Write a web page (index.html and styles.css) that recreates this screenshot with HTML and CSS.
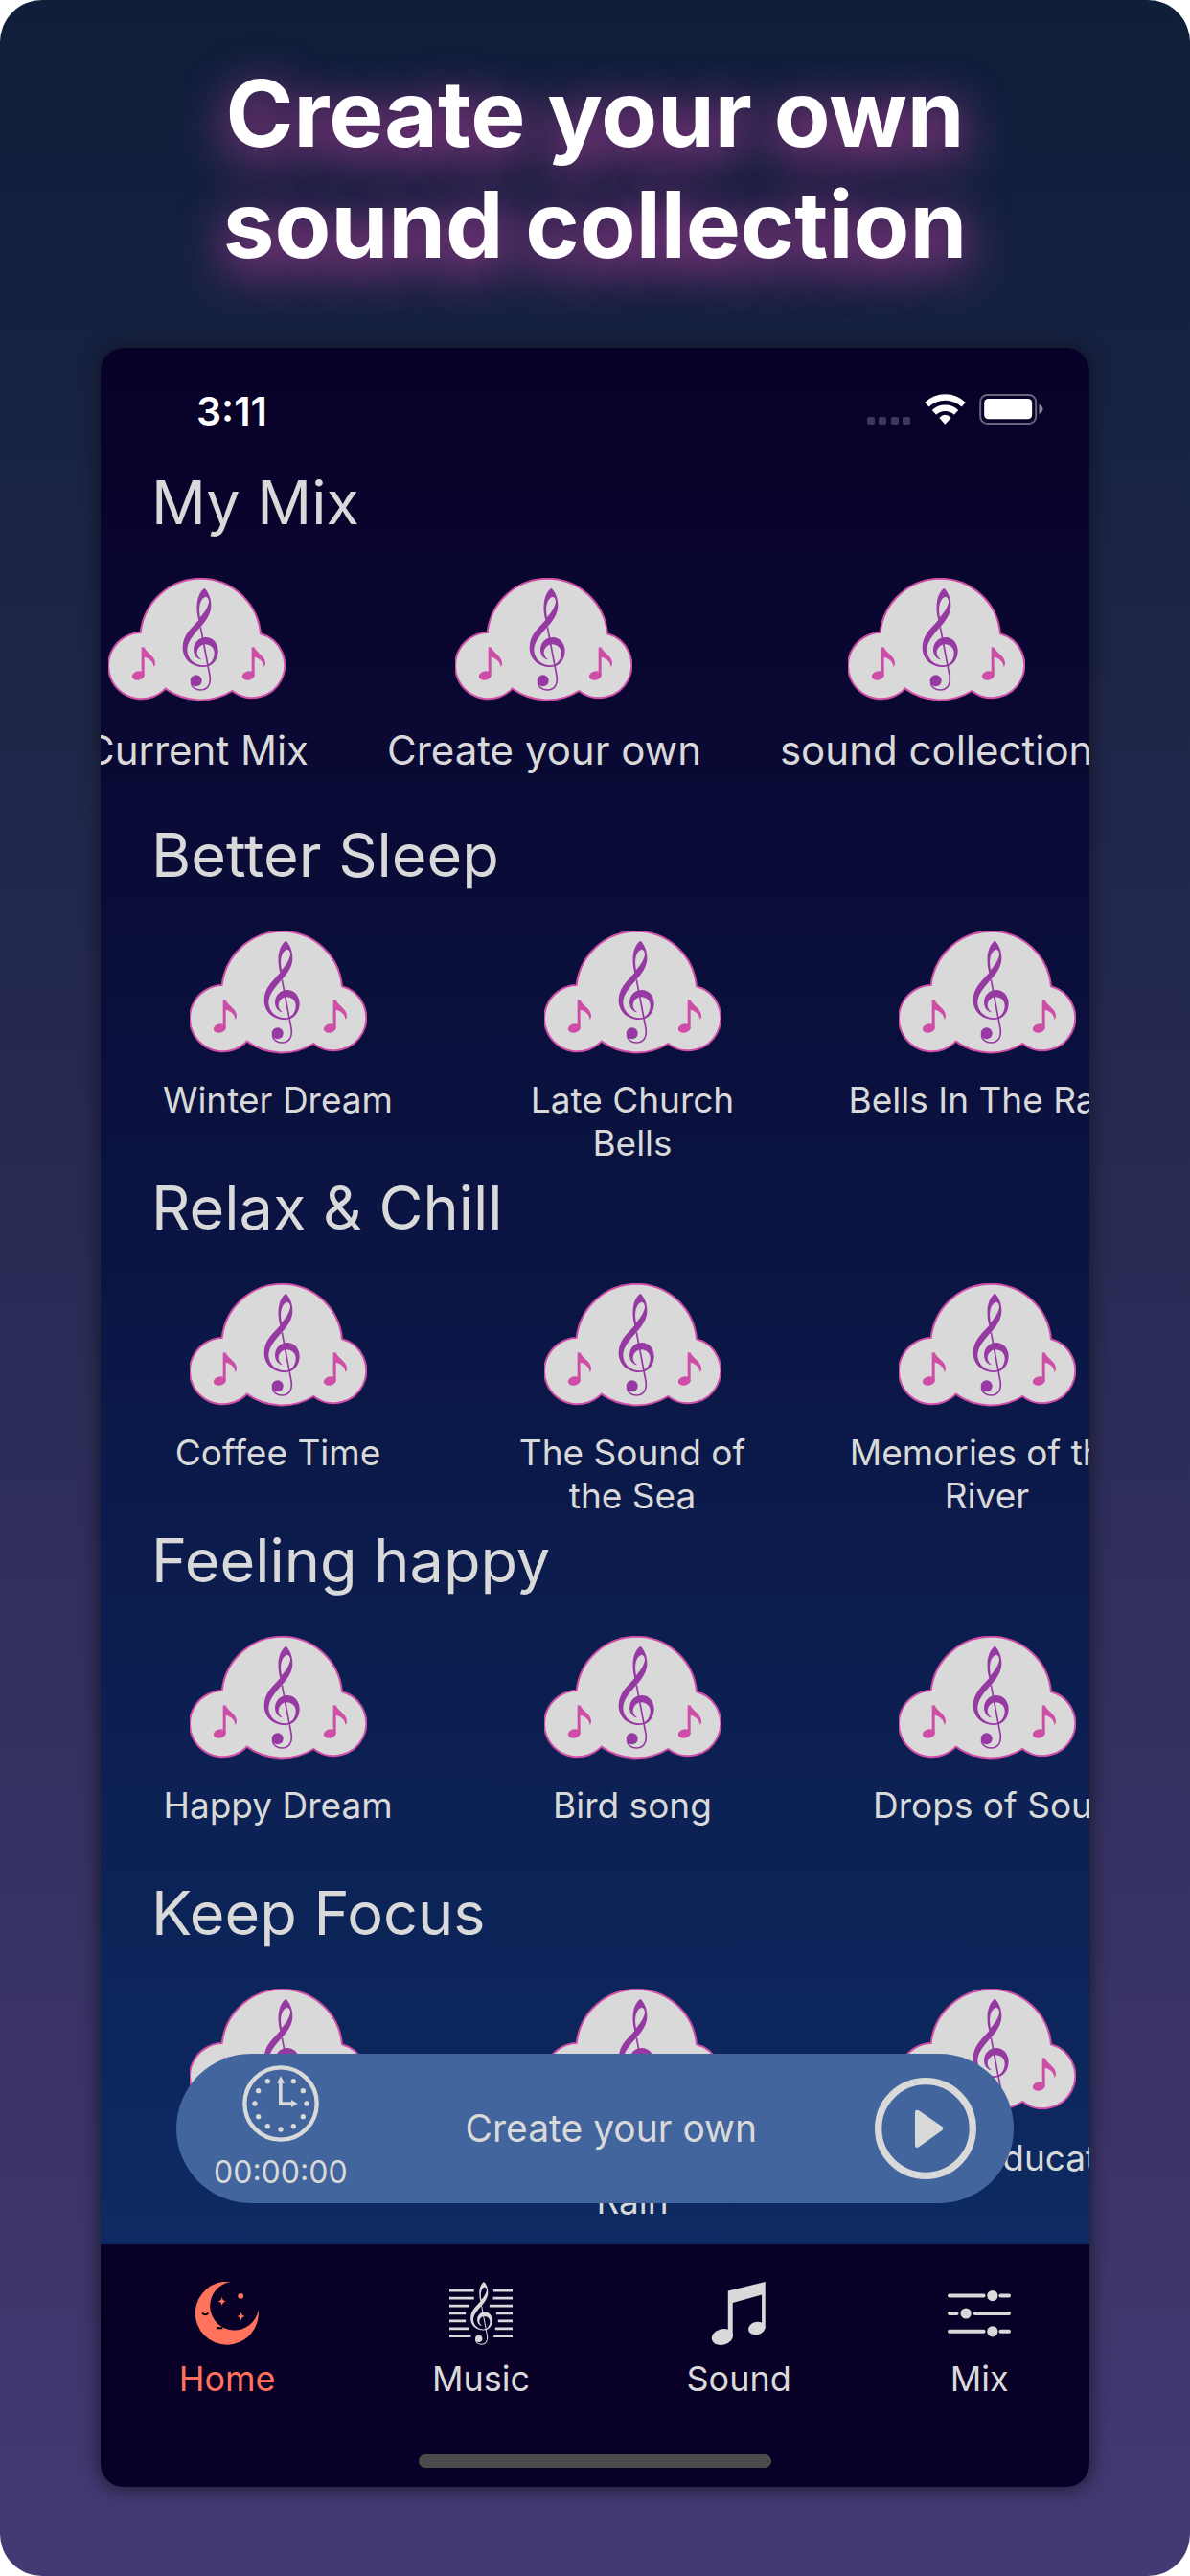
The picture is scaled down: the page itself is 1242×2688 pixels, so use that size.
FILE: index.html
```html
<!DOCTYPE html>
<html lang="en">
<head>
  <meta charset="UTF-8">
  <title>Create your own sound collection</title>
  <meta name="viewport" content="width=device-width, initial-scale=1">
  <link rel="stylesheet" href="styles.css">
</head>

<body>
  <!-- shared icons -->
  <svg class="sprite" aria-hidden="true">
    <symbol id="clef" viewBox="0 0 180 360" overflow="visible">
      <path fill="currentColor" fill-rule="evenodd" d="M82 126C72 90 74 46 100 26C114 38 122 62 121 84C119 118 92 142 72 166C52 190 46 206 46 222C48 250 72 268 98 268C118 268 131 250 131 229C131 212 116 201 101 202C84 203 74 222 78 234C80 242 86 247 91 250C80 251 66 238 66 220C66 196 84 180 104 180C128 180 143 200 143 223C143 252 124 273 98 273C60 273 32 248 32 212C32 172 62 150 82 126ZM87 118C104 98 114 80 114 66C113 58 108 53 103 54C90 58 79 80 87 118Z"/>
      <path fill="none" stroke="currentColor" stroke-width="5" d="M88 148L117 300C122 330 108 345 88 345C72 345 60 336 58 322"/>
      <circle fill="currentColor" cx="74" cy="316" r="18"/>
    </symbol>
    <symbol id="note" viewBox="0 0 74 108">
      <path fill="currentColor" d="M30 0H39C44 18 73 28 73 50C73 54 72 58 69 62C67 46 56 35 39 31V84H30Z"/>
      <ellipse fill="currentColor" cx="20" cy="89" rx="20" ry="14" transform="rotate(-14 20 89)"/>
    </symbol>
    <symbol id="cloud" viewBox="0 0 555 387">
      <path fill="#d9d9d9" stroke="#cf4da6" stroke-width="6" d="M101 171A189 190 0 0 1 477 175A102 102 0 1 1 388 354A188 188 0 0 1 179 347A104 104 0 1 1 101 171Z"/>
      <use href="#clef" x="201" y="6" width="180" height="360" color="#9639a2"/>
      <use href="#note" x="74" y="217" width="74" height="108" color="#cf4da6"/>
      <use href="#note" x="419" y="217" width="74" height="108" color="#cf4da6"/>
    </symbol>
  </svg>

  <div class="page">
    <h1 class="headline">Create your own<br>sound collection</h1>

    <div class="screen">
      <header class="status">
        <span class="status-time">3:11</span>
        <div class="status-icons">
          <svg class="cell" viewBox="0 0 46 8" fill="#3f3759">
            <rect width="8" height="8" rx="2"/>
            <rect x="12" width="8" height="8" rx="2"/>
            <rect x="25" width="8" height="8" rx="2"/>
            <rect x="37" width="8" height="8" rx="2"/>
          </svg>
          <svg class="wifi" viewBox="0 0 129 96" fill="none" stroke="#fff" stroke-width="19">
            <path d="M7 34A82 82 0 0 1 122 34"/>
            <path d="M30 58A50 50 0 0 1 99 58"/>
            <path fill="#fff" stroke="none" d="M46 75Q64 56 83 75L64 95Z"/>
          </svg>
          <svg class="battery" viewBox="0 0 200 96">
            <rect x="3" y="3" width="174" height="90" rx="22" fill="none" stroke="#6b6580" stroke-width="6"/>
            <rect x="15" y="15" width="150" height="64" rx="13" fill="#fff"/>
            <path d="M187 32Q199 38 199 47T187 63Z" fill="#8d889c"/>
          </svg>
        </div>
      </header>

      <main class="content">
        <section class="group">
          <h2 class="group-title">My Mix</h2>
          <div class="mixes">
            <button class="mix"><svg class="cloud"><use href="#cloud"/></svg>Current Mix</button>
            <button class="mix"><svg class="cloud"><use href="#cloud"/></svg>Create your own</button>
            <button class="mix"><svg class="cloud"><use href="#cloud"/></svg>sound collection</button>
          </div>
        </section>

        <section class="group">
          <h2 class="group-title">Better Sleep</h2>
          <div class="tracks">
            <button class="track"><svg class="cloud"><use href="#cloud"/></svg>Winter Dream</button>
            <button class="track"><svg class="cloud"><use href="#cloud"/></svg>Late Church Bells</button>
            <button class="track"><svg class="cloud"><use href="#cloud"/></svg>Bells In The Rain</button>
          </div>
        </section>

        <section class="group">
          <h2 class="group-title">Relax &amp; Chill</h2>
          <div class="tracks">
            <button class="track"><svg class="cloud"><use href="#cloud"/></svg>Coffee Time</button>
            <button class="track"><svg class="cloud"><use href="#cloud"/></svg>The Sound of the Sea</button>
            <button class="track"><svg class="cloud"><use href="#cloud"/></svg>Memories of the River</button>
          </div>
        </section>

        <section class="group">
          <h2 class="group-title">Feeling happy</h2>
          <div class="tracks">
            <button class="track"><svg class="cloud"><use href="#cloud"/></svg>Happy Dream</button>
            <button class="track"><svg class="cloud"><use href="#cloud"/></svg>Bird song</button>
            <button class="track"><svg class="cloud"><use href="#cloud"/></svg>Drops of Soul</button>
          </div>
        </section>

        <section class="group">
          <h2 class="group-title">Keep Focus</h2>
          <div class="tracks">
            <button class="track"><svg class="cloud"><use href="#cloud"/></svg>Focus</button>
            <button class="track"><svg class="cloud"><use href="#cloud"/></svg>The Sound of Rain</button>
            <button class="track"><svg class="cloud"><use href="#cloud"/></svg>School Educate</button>
          </div>
        </section>

        <div class="player">
          <button class="timer">
            <svg class="clock" viewBox="0 0 240 240" fill="currentColor">
              <circle cx="120" cy="120" r="113" fill="none" stroke="currentColor" stroke-width="13"/>
              <circle cx="160" cy="50" r="8"/>
              <circle cx="190" cy="80" r="8"/>
              <circle cx="201" cy="120" r="8"/>
              <circle cx="190" cy="161" r="8"/>
              <circle cx="160" cy="191" r="8"/>
              <circle cx="120" cy="201" r="8"/>
              <circle cx="79" cy="191" r="8"/>
              <circle cx="50" cy="161" r="8"/>
              <circle cx="39" cy="120" r="8"/>
              <circle cx="50" cy="80" r="8"/>
              <circle cx="79" cy="50" r="8"/>
              <path d="M120 34L132 56H125V115H153V108L173 120L153 132V125H114V56H108Z"/>
            </svg>
            00:00:00
          </button>
          <span class="player-title">Create your own</span>
          <button class="play" aria-label="Play">
            <svg viewBox="0 0 318 318" fill="currentColor">
              <circle cx="159" cy="159" r="148" fill="none" stroke="currentColor" stroke-width="22"/>
              <path d="M126 110Q126 97 138 103L211 153Q217 159 211 165L138 217Q126 223 126 210Z"/>
            </svg>
          </button>
        </div>
      </main>

      <nav class="tabs">
        <a class="tab active" href="#">
          <svg viewBox="0 0 200 200" fill="currentColor">
            <path d="M112 0A100 100 0 1 0 199 89A77 77 0 1 1 112 0Z"/>
            <circle cx="143" cy="45" r="9"/>
            <path d="M84 47Q85 61 97 62Q85 63 84 77Q83 63 71 62Q83 61 84 47Z"/>
            <path d="M144 94Q145 108 157 109Q145 110 144 124Q143 110 131 109Q143 108 144 94Z"/>
            <path d="M21 99Q31 109 41 99M67 146H86" fill="none" stroke="#000" stroke-width="6"/>
          </svg>
          Home
        </a>
        <a class="tab" href="#">
          <svg viewBox="0 0 200 200">
            <path d="M0 28H78M139 28H200M0 52H78M138 52H200M0 76H63M127 76H200M0 100H52M148 100H200M0 124H52M154 124H200M0 148H62M145 148H200M0 172H68M140 172H200" stroke="currentColor" stroke-width="8"/>
            <use href="#clef" x="47" y="-16" width="112" height="223"/>
          </svg>
          Music
        </a>
        <a class="tab" href="#">
          <svg viewBox="-15 0 200 200" fill="currentColor">
            <path d="M51 29L169 0V147H158V41L66 67V174H51Z"/>
            <ellipse cx="33" cy="174" rx="34" ry="25" transform="rotate(-14 33 174)"/>
            <ellipse cx="142" cy="147" rx="27" ry="20" transform="rotate(-14 142 147)"/>
          </svg>
          Sound
        </a>
        <a class="tab" href="#">
          <svg viewBox="0 0 200 200" fill="currentColor">
            <path d="M6 44H114M168 44H194M6 100H29M87 100H194M6 157H114M168 157H194" stroke="currentColor" stroke-width="12" stroke-linecap="round"/>
            <circle cx="142" cy="44" r="17"/>
            <circle cx="58" cy="100" r="17"/>
            <circle cx="142" cy="157" r="17"/>
          </svg>
          Mix
        </a>
      </nav>
      <div class="home-bar"></div>
    </div>
  </div>
</body>
</html>
```
FILE: styles.css
```css
* { box-sizing: border-box; }

body {
  margin: 0;
  background: #fff;
  font-family: Inter, "Noto Sans", sans-serif;
  color: #d9d9d9;
}

h1, h2 { margin: 0; }

button {
  padding: 0;
  border: 0;
  background: none;
  color: inherit;
  font: inherit;
}

svg { display: block; }

.sprite {
  position: absolute;
  width: 0;
  height: 0;
}

.page {
  display: flex;
  flex-direction: column;
  min-height: 100vh;
  padding: 60px 105px 93px;
  border-radius: 44px;
  background: linear-gradient(#0f1e39, #453973);
}

.headline {
  margin-bottom: 71px;
  color: #fff;
  font-size: 96px;
  font-weight: 700;
  line-height: 116px;
  text-align: center;
  text-shadow: 0 12px 50px rgb(214, 73, 178);
}

.screen {
  display: flex;
  flex-direction: column;
  flex: 1;
  overflow: hidden;
  border-radius: 24px;
  background: linear-gradient(#080027, #0d2b62 89%);
  box-shadow: 0 0 16px 4px rgba(16, 18, 28, 0.6);
}

/* status bar */
.status {
  display: flex;
  justify-content: space-between;
  height: 125px;
  padding: 42px 48px 0 100px;
}

.status-time {
  color: #fff;
  font-size: 41px;
  font-weight: 600;
  line-height: 48px;
}

.status-icons {
  display: flex;
  align-items: flex-end;
  height: 38px;
}

.cell { width: 46px; height: 8px; margin-right: 14px; }
.wifi { width: 43px; height: 32px; margin-right: 14px; }
.battery { width: 67px; height: 32px; }

/* sound groups */
.content {
  position: relative;
  flex: 1;
}

.group { padding-bottom: 9px; }

.group-title {
  padding: 0 53px;
  font-size: 63px;
  font-weight: 400;
  line-height: 72px;
}

.mixes, .tracks {
  display: flex;
  min-height: 287px;
  padding-top: 43px;
}

.mixes {
  gap: 82px;
  margin-left: -16px;
  font-size: 42px;
  line-height: 51px;
  white-space: nowrap;
}

.mix {
  display: flex;
  flex-direction: column;
  align-items: center;
}

.track {
  display: flex;
  flex-direction: column;
  align-items: center;
  flex: none;
  width: 370px;
  padding: 0 37px;
  font-size: 37px;
  line-height: 45px;
}

.cloud {
  flex: none;
  width: 185px;
  height: 129px;
  margin-bottom: 25px;
}

/* floating player */
.player {
  position: absolute;
  right: 79px;
  bottom: 43px;
  left: 79px;
  display: flex;
  align-items: center;
  justify-content: space-between;
  height: 156px;
  padding: 0 39px;
  border-radius: 78px;
  background: #43659d;
}

.timer {
  display: flex;
  flex-direction: column;
  align-items: center;
  gap: 12px;
  font-size: 32px;
  line-height: 40px;
}

.clock { width: 80px; height: 80px; }

.player-title {
  font-size: 39px;
  line-height: 48px;
}

.play { width: 106px; height: 106px; }

/* bottom tabs */
.tabs {
  display: flex;
  justify-content: space-around;
  height: 219px;
  padding-top: 39px;
  background: #080027;
}

.tab {
  display: flex;
  flex-direction: column;
  align-items: center;
  gap: 13px;
  color: inherit;
  font-size: 36px;
  line-height: 44px;
  text-decoration: none;
}

.tab svg { width: 66px; height: 66px; }

.tab.active { color: #ff735c; }

.home-bar {
  height: 34px;
  background: #080027;
}

.home-bar::before {
  content: "";
  display: block;
  width: 368px;
  height: 14px;
  margin: 0 auto;
  border-radius: 7px;
  background: #4b4b4b;
}
```
